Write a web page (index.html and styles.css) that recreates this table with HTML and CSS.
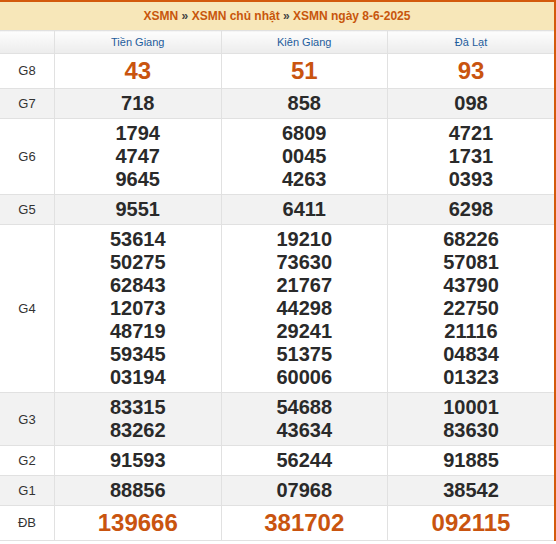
FILE: index.html
```html
<!DOCTYPE html>
<html lang="vi">
<head>
<meta charset="utf-8">
<title>XSMN ngày 8-6-2025</title>
<link rel="stylesheet" href="styles.css">
</head>
<body>
<div class="box">
  <div class="title">
    <a class="lnk">XSMN</a> <span class="sep">»</span> <a class="lnk">XSMN chủ nhật</a> <span class="sep">»</span> <a class="lnk">XSMN ngày 8-6-2025</a>
  </div>
  <table class="kq">
    <thead>
      <tr class="head">
        <th class="lbl"></th>
        <th>Tiền Giang</th>
        <th>Kiên Giang</th>
        <th>Đà Lạt</th>
      </tr>
    </thead>
    <tbody>
      <tr class="big">
        <td class="lbl">G8</td>
        <td>43</td><td>51</td><td>93</td>
      </tr>
      <tr class="alt">
        <td class="lbl">G7</td>
        <td>718</td><td>858</td><td>098</td>
      </tr>
      <tr>
        <td class="lbl">G6</td>
        <td>1794<br>4747<br>9645</td>
        <td>6809<br>0045<br>4263</td>
        <td>4721<br>1731<br>0393</td>
      </tr>
      <tr class="alt">
        <td class="lbl">G5</td>
        <td>9551</td><td>6411</td><td>6298</td>
      </tr>
      <tr>
        <td class="lbl">G4</td>
        <td>53614<br>50275<br>62843<br>12073<br>48719<br>59345<br>03194</td>
        <td>19210<br>73630<br>21767<br>44298<br>29241<br>51375<br>60006</td>
        <td>68226<br>57081<br>43790<br>22750<br>21116<br>04834<br>01323</td>
      </tr>
      <tr class="alt">
        <td class="lbl">G3</td>
        <td>83315<br>83262</td>
        <td>54688<br>43634</td>
        <td>10001<br>83630</td>
      </tr>
      <tr>
        <td class="lbl">G2</td>
        <td>91593</td><td>56244</td><td>91885</td>
      </tr>
      <tr class="alt">
        <td class="lbl">G1</td>
        <td>88856</td><td>07968</td><td>38542</td>
      </tr>
      <tr class="big">
        <td class="lbl">ĐB</td>
        <td>139666</td><td>381702</td><td>092115</td>
      </tr>
    </tbody>
  </table>
</div>
</body>
</html>
```

FILE: styles.css
```css
html, body {
  margin: 0;
  padding: 0;
  background: #fff;
}
body {
  font-family: "Liberation Sans", Arial, sans-serif;
  color: #222;
}
.box {
  width: 554px;
  border-top: 2px solid #d35a0c;
  border-right: 2px solid #d35a0c;
  background: #fff;
}
.title {
  height: 28px;
  line-height: 28px;
  background: #f7e7b9;
  text-align: center;
  font-size: 12px;
  font-weight: bold;
  color: #333;
}
.title .lnk {
  color: #c8560c;
  text-decoration: none;
}
.title .sep {
  color: #444;
  font-weight: bold;
}
.kq {
  width: 554px;
  border-collapse: collapse;
  table-layout: fixed;
}
.kq th, .kq td {
  border: 1px solid #e1e1e1;
  text-align: center;
  padding: 0;
}
.kq tr > :first-child {
  border-left: none;
}
.kq tr > :last-child {
  border-right: none;
}
.kq th.lbl, .kq td.lbl {
  width: 54px;
}
.head th {
  height: 22px;
  background: linear-gradient(#fdfdfd, #ececec);
  font-size: 11px;
  font-weight: normal;
  color: #1e5c9c;
}
.kq td {
  padding: 3px 0;
  font-size: 20px;
  line-height: 23px;
  font-weight: bold;
  color: #2a2a2a;
}
.kq td.lbl {
  font-size: 13px;
  font-weight: normal;
  color: #333;
}
.kq tr.alt td {
  background: #f2f2f2;
}
.kq tr.big td {
  font-size: 24px;
  line-height: 28px;
  color: #c9540f;
}
.kq tr.big td.lbl {
  font-size: 13px;
  color: #333;
}
```
